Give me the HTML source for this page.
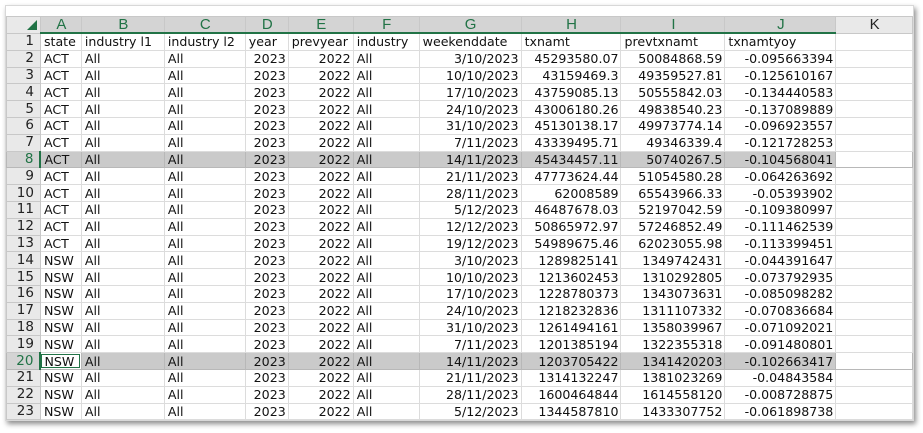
<!DOCTYPE html>
<html><head><meta charset="utf-8"><style>
body{margin:0;background:#fff;width:923px;height:433px;overflow:hidden;font-family:"DejaVu Sans","Liberation Sans",sans-serif;}
.frame{position:absolute;left:5px;top:5px;width:907px;height:414px;background:#fff;box-shadow:2px 3px 5px rgba(0,0,0,.45);border:1px solid #d8d8d8;overflow:hidden}
table{position:absolute;left:0;top:10px;border-collapse:collapse;table-layout:fixed;font-size:12.6px;color:#111}
td{height:15.8px;border:1px solid #dcdcdc;padding:0 2px 0 3px;white-space:nowrap;overflow:hidden;line-height:15px}
td.r{text-align:right}
tr.h td{background:#e9e9e9;text-align:center;color:#217346;border-color:#c8c8c8;border-bottom:2px solid #217346;height:14px;font-family:"Liberation Sans",sans-serif;font-size:15px}
tr.h td.sel{background:#d4d4d4}
tr.h td.k{color:#222;border-bottom:1px solid #c8c8c8}
tr.h td.c{background:#e9e9e9;border-bottom:1px solid #c8c8c8}
td.n{background:#e9e9e9;text-align:right;padding-right:6px;border-color:#c8c8c8;color:#222;font-size:13.5px}
tr.g td{background:#cacaca;border-color:#b8b8b8}
tr.g td.n{background:#d4d4d4;color:#217346;border-right:2px solid #217346}
tr.g td.k{background:#fff}
td.k{background:#fff}
.box{outline:1.5px solid #217346;outline-offset:-2px}
</style></head><body><div class="frame">
<table>
<colgroup><col style="width:34px"><col style="width:41px"><col style="width:83px"><col style="width:81px"><col style="width:43px"><col style="width:65px"><col style="width:66px"><col style="width:102px"><col style="width:100px"><col style="width:104px"><col style="width:111px"><col style="width:77px"></colgroup>
<tr class="h"><td class="c"><svg width="10" height="10" style="position:relative;left:8px;top:1px"><polygon points="10,0 10,10 0,10" fill="#217346"/></svg></td><td class="sel">A</td><td class="sel">B</td><td class="sel">C</td><td class="sel">D</td><td class="sel">E</td><td class="sel">F</td><td class="sel">G</td><td class="sel">H</td><td class="sel">I</td><td class="sel">J</td><td class="k">K</td></tr>
<tr><td class="n">1</td><td>state</td><td>industry l1</td><td>industry l2</td><td>year</td><td>prevyear</td><td>industry</td><td>weekenddate</td><td>txnamt</td><td>prevtxnamt</td><td>txnamtyoy</td><td class="k"></td></tr>
<tr><td class="n">2</td><td>ACT</td><td>All</td><td>All</td><td class="r">2023</td><td class="r">2022</td><td>All</td><td class="r">3/10/2023</td><td class="r">45293580.07</td><td class="r">50084868.59</td><td class="r">-0.095663394</td><td class="k"></td></tr>
<tr><td class="n">3</td><td>ACT</td><td>All</td><td>All</td><td class="r">2023</td><td class="r">2022</td><td>All</td><td class="r">10/10/2023</td><td class="r">43159469.3</td><td class="r">49359527.81</td><td class="r">-0.125610167</td><td class="k"></td></tr>
<tr><td class="n">4</td><td>ACT</td><td>All</td><td>All</td><td class="r">2023</td><td class="r">2022</td><td>All</td><td class="r">17/10/2023</td><td class="r">43759085.13</td><td class="r">50555842.03</td><td class="r">-0.134440583</td><td class="k"></td></tr>
<tr><td class="n">5</td><td>ACT</td><td>All</td><td>All</td><td class="r">2023</td><td class="r">2022</td><td>All</td><td class="r">24/10/2023</td><td class="r">43006180.26</td><td class="r">49838540.23</td><td class="r">-0.137089889</td><td class="k"></td></tr>
<tr><td class="n">6</td><td>ACT</td><td>All</td><td>All</td><td class="r">2023</td><td class="r">2022</td><td>All</td><td class="r">31/10/2023</td><td class="r">45130138.17</td><td class="r">49973774.14</td><td class="r">-0.096923557</td><td class="k"></td></tr>
<tr><td class="n">7</td><td>ACT</td><td>All</td><td>All</td><td class="r">2023</td><td class="r">2022</td><td>All</td><td class="r">7/11/2023</td><td class="r">43339495.71</td><td class="r">49346339.4</td><td class="r">-0.121728253</td><td class="k"></td></tr>
<tr class="g"><td class="n">8</td><td>ACT</td><td>All</td><td>All</td><td class="r">2023</td><td class="r">2022</td><td>All</td><td class="r">14/11/2023</td><td class="r">45434457.11</td><td class="r">50740267.5</td><td class="r">-0.104568041</td><td class="k"></td></tr>
<tr><td class="n">9</td><td>ACT</td><td>All</td><td>All</td><td class="r">2023</td><td class="r">2022</td><td>All</td><td class="r">21/11/2023</td><td class="r">47773624.44</td><td class="r">51054580.28</td><td class="r">-0.064263692</td><td class="k"></td></tr>
<tr><td class="n">10</td><td>ACT</td><td>All</td><td>All</td><td class="r">2023</td><td class="r">2022</td><td>All</td><td class="r">28/11/2023</td><td class="r">62008589</td><td class="r">65543966.33</td><td class="r">-0.05393902</td><td class="k"></td></tr>
<tr><td class="n">11</td><td>ACT</td><td>All</td><td>All</td><td class="r">2023</td><td class="r">2022</td><td>All</td><td class="r">5/12/2023</td><td class="r">46487678.03</td><td class="r">52197042.59</td><td class="r">-0.109380997</td><td class="k"></td></tr>
<tr><td class="n">12</td><td>ACT</td><td>All</td><td>All</td><td class="r">2023</td><td class="r">2022</td><td>All</td><td class="r">12/12/2023</td><td class="r">50865972.97</td><td class="r">57246852.49</td><td class="r">-0.111462539</td><td class="k"></td></tr>
<tr><td class="n">13</td><td>ACT</td><td>All</td><td>All</td><td class="r">2023</td><td class="r">2022</td><td>All</td><td class="r">19/12/2023</td><td class="r">54989675.46</td><td class="r">62023055.98</td><td class="r">-0.113399451</td><td class="k"></td></tr>
<tr><td class="n">14</td><td>NSW</td><td>All</td><td>All</td><td class="r">2023</td><td class="r">2022</td><td>All</td><td class="r">3/10/2023</td><td class="r">1289825141</td><td class="r">1349742431</td><td class="r">-0.044391647</td><td class="k"></td></tr>
<tr><td class="n">15</td><td>NSW</td><td>All</td><td>All</td><td class="r">2023</td><td class="r">2022</td><td>All</td><td class="r">10/10/2023</td><td class="r">1213602453</td><td class="r">1310292805</td><td class="r">-0.073792935</td><td class="k"></td></tr>
<tr><td class="n">16</td><td>NSW</td><td>All</td><td>All</td><td class="r">2023</td><td class="r">2022</td><td>All</td><td class="r">17/10/2023</td><td class="r">1228780373</td><td class="r">1343073631</td><td class="r">-0.085098282</td><td class="k"></td></tr>
<tr><td class="n">17</td><td>NSW</td><td>All</td><td>All</td><td class="r">2023</td><td class="r">2022</td><td>All</td><td class="r">24/10/2023</td><td class="r">1218232836</td><td class="r">1311107332</td><td class="r">-0.070836684</td><td class="k"></td></tr>
<tr><td class="n">18</td><td>NSW</td><td>All</td><td>All</td><td class="r">2023</td><td class="r">2022</td><td>All</td><td class="r">31/10/2023</td><td class="r">1261494161</td><td class="r">1358039967</td><td class="r">-0.071092021</td><td class="k"></td></tr>
<tr><td class="n">19</td><td>NSW</td><td>All</td><td>All</td><td class="r">2023</td><td class="r">2022</td><td>All</td><td class="r">7/11/2023</td><td class="r">1201385194</td><td class="r">1322355318</td><td class="r">-0.091480801</td><td class="k"></td></tr>
<tr class="g"><td class="n">20</td><td class="box" style="background:#fff">NSW</td><td>All</td><td>All</td><td class="r">2023</td><td class="r">2022</td><td>All</td><td class="r">14/11/2023</td><td class="r">1203705422</td><td class="r">1341420203</td><td class="r">-0.102663417</td><td class="k"></td></tr>
<tr><td class="n">21</td><td>NSW</td><td>All</td><td>All</td><td class="r">2023</td><td class="r">2022</td><td>All</td><td class="r">21/11/2023</td><td class="r">1314132247</td><td class="r">1381023269</td><td class="r">-0.04843584</td><td class="k"></td></tr>
<tr><td class="n">22</td><td>NSW</td><td>All</td><td>All</td><td class="r">2023</td><td class="r">2022</td><td>All</td><td class="r">28/11/2023</td><td class="r">1600464844</td><td class="r">1614558120</td><td class="r">-0.008728875</td><td class="k"></td></tr>
<tr><td class="n">23</td><td>NSW</td><td>All</td><td>All</td><td class="r">2023</td><td class="r">2022</td><td>All</td><td class="r">5/12/2023</td><td class="r">1344587810</td><td class="r">1433307752</td><td class="r">-0.061898738</td><td class="k"></td></tr>
</table></div></body></html>
